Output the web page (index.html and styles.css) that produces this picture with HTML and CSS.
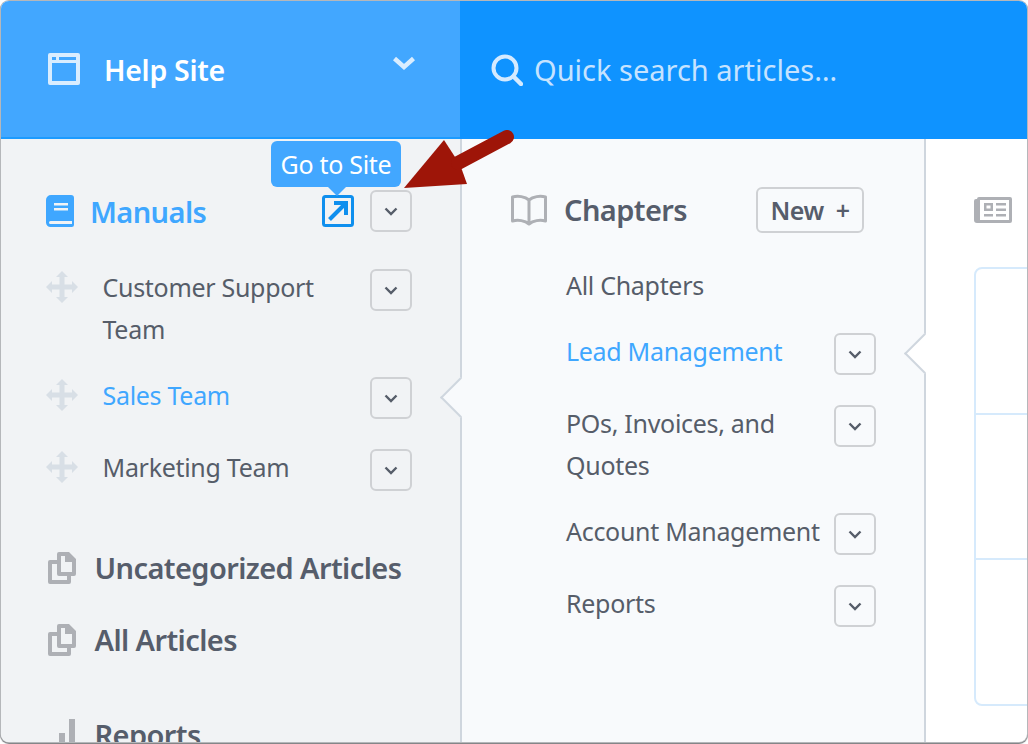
FILE: index.html
```html
<!DOCTYPE html>
<html lang="en">
<head>
  <meta charset="UTF-8" />
  <meta name="viewport" content="width=device-width, initial-scale=1.0" />
  <title>Help Site</title>
  <link rel="stylesheet" href="styles.css">
</head>
<body>
  <div class="window">
    <!-- Top bar -->
    <header class="topbar">
      <div class="site-switch">
        <svg class="site-icon" viewBox="0 0 32 32"><path fill-rule="evenodd" d="M2 0h28a2 2 0 0 1 2 2v28a2 2 0 0 1-2 2H2a2 2 0 0 1-2-2V2a2 2 0 0 1 2-2zm2 10v18h24V10zm0-6v3h4V4zm7 0v3h17V4z"/></svg>
        <span class="site-name">Help Site</span>
        <svg class="site-caret" viewBox="0 0 24 14"><path d="M2.500 2.500 12 11l9.500-8.500" fill="none" stroke-width="4.500"/></svg>
      </div>
      <div class="search">
        <svg class="search-icon" viewBox="0 0 32 32"><circle cx="14" cy="14" r="11.500" fill="none" stroke-width="4"/><path d="m22.500 22.500 7.500 7.500" fill="none" stroke-width="4.500" stroke-linecap="round"/></svg>
        <span class="search-text">Quick search articles…</span>
      </div>
    </header>

    <div class="panels">
      <!-- Manuals column -->
      <nav class="sidebar">
        <div class="row heading-row">
          <svg class="book-icon" viewBox="0 0 28 32"><path fill-rule="evenodd" d="M5 0h20a3 3 0 0 1 3 3v26.500a2.500 2.500 0 0 1-2.500 2.500H4.500A4.500 4.500 0 0 1 0 27.500V5a5 5 0 0 1 5-5zm3 8v2.500h14V8zm0 5v2.500h14V13zM4.500 26a1.500 1.500 0 0 0 0 3H26v-3z"/></svg>
          <span class="heading active-text">Manuals</span>
          <span class="goto">
            <span class="tooltip">Go to Site</span>
            <svg class="goto-icon" viewBox="0 0 32 32"><rect x="1.500" y="1.500" width="29" height="29" rx="2" fill="none" stroke-width="3"/><path d="M7.500 24.500 22 10" fill="none" stroke-width="4"/><path d="M12 8h12v12" fill="none" stroke-width="4"/></svg>
          </span>
          <button class="caret-btn"><svg viewBox="0 0 14 9"><path d="M1.500 1.500 7 7l5.500-5.500" fill="none" stroke-width="2.400"/></svg></button>
        </div>

        <ul class="manual-list">
          <li class="row">
            <svg class="move-icon" viewBox="0 0 32 32"><path d="M16 0l6 6h-3.500v7.500H26V10l6 6-6 6v-3.500h-7.500V26H22l-6 6-6-6h3.500v-7.500H6V22l-6-6 6-6v3.500h7.500V6H10z"/></svg>
            <span class="item-text">Customer Support Team</span>
            <button class="caret-btn"><svg viewBox="0 0 14 9"><path d="M1.500 1.500 7 7l5.500-5.500" fill="none" stroke-width="2.400"/></svg></button>
          </li>
          <li class="row">
            <svg class="move-icon" viewBox="0 0 32 32"><path d="M16 0l6 6h-3.500v7.500H26V10l6 6-6 6v-3.500h-7.500V26H22l-6 6-6-6h3.500v-7.500H6V22l-6-6 6-6v3.500h7.500V6H10z"/></svg>
            <span class="item-text active-text">Sales Team</span>
            <button class="caret-btn"><svg viewBox="0 0 14 9"><path d="M1.500 1.500 7 7l5.500-5.500" fill="none" stroke-width="2.400"/></svg></button>
            <span class="notch"></span>
          </li>
          <li class="row">
            <svg class="move-icon" viewBox="0 0 32 32"><path d="M16 0l6 6h-3.500v7.500H26V10l6 6-6 6v-3.500h-7.500V26H22l-6 6-6-6h3.500v-7.500H6V22l-6-6 6-6v3.500h7.500V6H10z"/></svg>
            <span class="item-text">Marketing Team</span>
            <button class="caret-btn"><svg viewBox="0 0 14 9"><path d="M1.500 1.500 7 7l5.500-5.500" fill="none" stroke-width="2.400"/></svg></button>
          </li>
        </ul>

        <div class="articles-links">
          <a class="link-row">
            <svg class="copy-icon" viewBox="0 0 28 32"><path fill-rule="evenodd" d="M11 0h10l7 7v15a2 2 0 0 1-2 2h-3v6a2 2 0 0 1-2 2H2a2 2 0 0 1-2-2V10a2 2 0 0 1 2-2h7V2a2 2 0 0 1 2-2zm2 4v16h11V10h-7V4zM4 12v16h15v-4h-8a2 2 0 0 1-2-2V12z"/></svg>
            <span class="heading">Uncategorized Articles</span>
          </a>
          <a class="link-row">
            <svg class="copy-icon" viewBox="0 0 28 32"><path fill-rule="evenodd" d="M11 0h10l7 7v15a2 2 0 0 1-2 2h-3v6a2 2 0 0 1-2 2H2a2 2 0 0 1-2-2V10a2 2 0 0 1 2-2h7V2a2 2 0 0 1 2-2zm2 4v16h11V10h-7V4zM4 12v16h15v-4h-8a2 2 0 0 1-2-2V12z"/></svg>
            <span class="heading">All Articles</span>
          </a>
          <a class="link-row reports-link">
            <svg class="copy-icon" viewBox="0 0 28 32"><path d="M1 24h6v8H1zM11 14h6v18h-6zM21 0h6v32h-6z"/></svg>
            <span class="heading">Reports</span>
          </a>
        </div>
      </nav>

      <!-- Chapters column -->
      <section class="chapters">
        <div class="chapters-head">
          <svg class="open-book" viewBox="0 0 38 32"><path d="M19 6C15 2.500 8 1.500 2.500 3v24C8 25.500 15 26.500 19 30c4-3.500 11-4.500 16.500-3V3C30 1.500 23 2.500 19 6zM19 6v24" fill="none" stroke-width="3" stroke-linejoin="round"/></svg>
          <span class="heading">Chapters</span>
          <button class="new-btn">New <span class="plus">+</span></button>
        </div>
        <ul class="chapter-list">
          <li class="chapter plain"><span class="item-text">All Chapters</span></li>
          <li class="chapter">
            <span class="item-text active-text">Lead Management</span>
            <button class="caret-btn"><svg viewBox="0 0 14 9"><path d="M1.500 1.500 7 7l5.500-5.500" fill="none" stroke-width="2.400"/></svg></button>
            <span class="notch notch-white"></span>
          </li>
          <li class="chapter">
            <span class="item-text">POs, Invoices, and Quotes</span>
            <button class="caret-btn"><svg viewBox="0 0 14 9"><path d="M1.500 1.500 7 7l5.500-5.500" fill="none" stroke-width="2.400"/></svg></button>
          </li>
          <li class="chapter">
            <span class="item-text">Account Management</span>
            <button class="caret-btn"><svg viewBox="0 0 14 9"><path d="M1.500 1.500 7 7l5.500-5.500" fill="none" stroke-width="2.400"/></svg></button>
          </li>
          <li class="chapter">
            <span class="item-text">Reports</span>
            <button class="caret-btn"><svg viewBox="0 0 14 9"><path d="M1.500 1.500 7 7l5.500-5.500" fill="none" stroke-width="2.400"/></svg></button>
          </li>
        </ul>
      </section>

      <!-- Articles column -->
      <main class="content">
        <svg class="news-icon" viewBox="0 0 38 26"><path fill-rule="evenodd" d="M5 0h31a2 2 0 0 1 2 2v22a2 2 0 0 1-2 2H3a3 3 0 0 1-3-3V4a2 2 0 0 1 2-2h1a2 2 0 0 1 2-2zm1 3v20h29V3zM3 5v18h0V5zM10 6h9v8h-9zm2.500 2.500v3h4v-3zM22 6h10v2.500H22zm0 5.500h10V14H22zM10 17h9v2.500h-9zm12 0h10v2.500H22z"/></svg>
        <div class="article-card">
          <div class="article-slot"></div>
          <div class="article-slot"></div>
          <div class="article-slot"></div>
        </div>
      </main>
    </div>

    <!-- Annotation arrow -->
    <svg class="callout-arrow" viewBox="0 0 120 70"><path d="M0 58 40 10l11 17 7 13 5 14z" fill="#9e1508"/><path d="M54 33 103 7" fill="none" stroke="#9e1508" stroke-width="14" stroke-linecap="round"/></svg>
  </div>
</body>
</html>
```

FILE: styles.css
```css
/* RESET & BASE */
* {
  margin: 0;
  padding: 0;
  box-sizing: border-box;
}
html, body {
  height: 100%;
  overflow: hidden;
}
body {
  font-family: "Noto Sans", sans-serif;
  font-size: 25px;
  line-height: 42px;
  letter-spacing: -0.3px;
  color: #565d69;
  background: #fff;
  padding: 1px 1px 2px;
}
ul {
  list-style: none;
}
svg {
  display: block;
  flex: none;
}
.window {
  position: relative;
  height: 741px;
  border-radius: 8px;
  overflow: hidden;
  box-shadow: 0 0 0 1px #b5b7ba, 0 1px 1px 1px #77797c;
  display: flex;
  flex-direction: column;
  background: #fff;
}
.active-text {
  color: #3fa7ff;
}
.heading {
  font-size: 29px;
  font-weight: 600;
  color: #565d6b;
  letter-spacing: -0.6px;
}
.heading.active-text {
  color: #3fa7ff;
}

/* TOP BAR */
.topbar {
  height: 138px;
  display: flex;
  flex: none;
  color: #fff;
}
.site-switch {
  width: 459px;
  background: #42a7ff;
  border-bottom: 2px solid #1c9bff;
  display: flex;
  align-items: center;
  padding: 0 44px 0 47px;
}
.site-icon {
  width: 32px;
  height: 32px;
  fill: #d9edff;
}
.site-name {
  font-size: 28.500px;
  font-weight: 600;
  margin: 2px 0 0 24px;
  flex: 1;
}
.site-caret {
  width: 24px;
  height: 14px;
  stroke: #d9edff;
  margin-bottom: 12px;
}
.search {
  flex: 1;
  background: #0f93ff;
  display: flex;
  align-items: center;
  padding-left: 31px;
}
.search-icon {
  width: 32px;
  height: 32px;
  stroke: #d4eaff;
}
.search-text {
  font-size: 29px;
  letter-spacing: 0;
  margin-left: 11px;
  color: #c6e3ff;
}

/* COLUMNS */
.panels {
  flex: 1;
  display: flex;
  min-height: 0;
}
.sidebar {
  width: 461px;
  flex: none;
  background: #f1f3f5;
  border-right: 2px solid #cfd6de;
  padding: 51px 48px 0 45px;
}
.row {
  position: relative;
  display: flex;
  align-items: flex-start;
}
.heading-row {
  align-items: center;
  height: 42px;
}
.book-icon {
  width: 28px;
  height: 32px;
  fill: #3fa7ff;
  margin-right: 16px;
}
.heading-row .heading {
  flex: 1;
  margin-top: 2px;
}
.goto {
  position: relative;
}
.goto-icon {
  width: 32px;
  height: 32px;
  stroke: #0f8fee;
  margin-right: 16px;
}
.tooltip {
  position: absolute;
  left: -51px;
  bottom: 40px;
  height: 46px;
  width: 130px;
  text-align: center;
  white-space: nowrap;
  background: #42a7ff;
  color: #fff;
  border-radius: 6px;
  line-height: 46px;
  font-size: 25px;
}
.tooltip::after {
  content: "";
  position: absolute;
  left: 57px;
  top: 46px;
  border: 9px solid transparent;
  border-top-color: #42a7ff;
  border-bottom: 0;
}
.caret-btn {
  width: 42px;
  height: 42px;
  flex: none;
  margin: 2px 0 4px;
  background: transparent;
  border: 2px solid #cfd1d4;
  border-radius: 6px;
  display: flex;
  align-items: center;
  justify-content: center;
}
.caret-btn svg {
  width: 14px;
  height: 9px;
  stroke: #565d69;
}
.heading-row .caret-btn {
  margin: 0;
}
.manual-list {
  display: flex;
  flex-direction: column;
  gap: 24px;
  margin-top: 35px;
}
.move-icon {
  width: 32px;
  height: 32px;
  fill: #d8dfe6;
  margin: 4px 24.500px 0 0;
}
.item-text {
  flex: 1;
  margin: -1px 0 1px;
}
.notch {
  position: absolute;
  top: 8px;
  left: calc(100% + 34px);
  width: 29px;
  height: 29px;
  background: #f8fafc;
  border-left: 2px solid #cfd6de;
  border-bottom: 2px solid #cfd6de;
  transform: rotate(45deg);
}
.notch-white {
  background: #fff;
}
.articles-links {
  margin-top: 52px;
  display: flex;
  flex-direction: column;
  gap: 30px;
}
.link-row {
  display: flex;
  align-items: center;
  height: 42px;
  padding-left: 2px;
}
.copy-icon {
  width: 28px;
  height: 32px;
  fill: #aeb0b5;
  margin-right: 18.500px;
}
.reports-link {
  margin-top: 23px;
}

/* CHAPTERS */
.chapters {
  width: 464px;
  flex: none;
  background: #f8fafc;
  border-right: 2px solid #cfd6de;
  padding: 48px 48px 0 48px;
}
.chapters-head {
  display: flex;
  align-items: center;
  height: 46px;
}
.open-book {
  width: 38px;
  height: 32px;
  stroke: #aeb0b5;
  margin-right: 16px;
}
.chapters-head .heading {
  flex: 1;
}
.new-btn {
  height: 46px;
  width: 108px;
  margin-right: 12px;
  font: 600 25px "Noto Sans", sans-serif;
  color: #565d6b;
  background: transparent;
  border: 2px solid #cfd1d4;
  border-radius: 6px;
  letter-spacing: -0.5px;
}
.plus {
  margin-left: 6px;
}
.chapter-list {
  display: flex;
  flex-direction: column;
  gap: 24px;
  margin: 32px 0 0 56px;
}
.chapter {
  position: relative;
  display: flex;
  align-items: flex-start;
}
.chapter .item-text {
  padding-right: 8px;
}

/* ARTICLES */
.content {
  flex: 1;
  padding: 58px 0 0 48px;
  min-width: 0;
}
.news-icon {
  width: 38px;
  height: 26px;
  fill: #aeb0b5;
}
.article-card {
  height: 439px;
  margin: 44px -10px 0 0;
  border: 2px solid #d6eafc;
  border-radius: 8px;
  display: flex;
  flex-direction: column;
}
.article-slot {
  flex: 1;
}
.article-slot + .article-slot {
  border-top: 2px solid #d6eafc;
}

/* ANNOTATION */
.callout-arrow {
  position: absolute;
  left: 403px;
  top: 129px;
  width: 120px;
  height: 70px;
}
```
